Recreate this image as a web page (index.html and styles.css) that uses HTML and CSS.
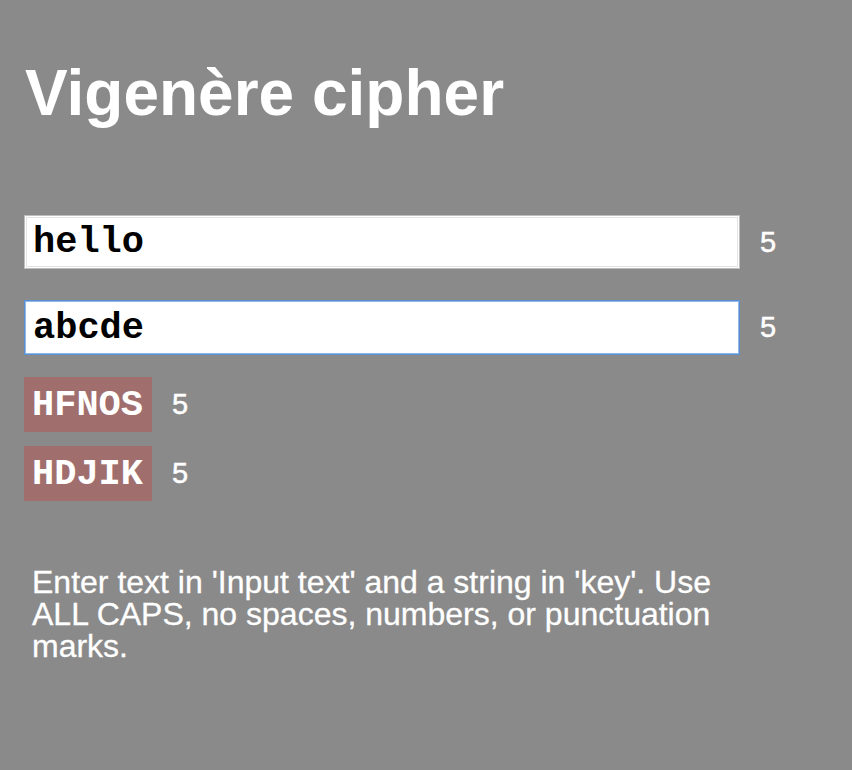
FILE: index.html
```html
<!DOCTYPE html>
<html lang="en">
<head>
<meta charset="utf-8">
<title>Vigenère cipher</title>
<link rel="stylesheet" href="styles.css">
</head>
<body>
<main class="app">
  <h1 class="title">Vigenère cipher</h1>
  <div class="inputs">
    <div class="row">
      <input class="field" type="text" value="hello" aria-label="Input text">
      <span class="count">5</span>
    </div>
    <div class="row">
      <input class="field field--focus" type="text" value="abcde" aria-label="key">
      <span class="count">5</span>
    </div>
  </div>
  <div class="results">
    <div class="row">
      <span class="result">HFNOS</span>
      <span class="count">5</span>
    </div>
    <div class="row">
      <span class="result">HDJIK</span>
      <span class="count">5</span>
    </div>
  </div>
  <p class="help">Enter text in 'Input text' and a string in 'key'. Use ALL CAPS, no spaces, numbers, or punctuation marks.</p>
</main>
</body>
</html>
```

FILE: styles.css
```css
html, body {
  margin: 0;
  padding: 0;
  background: #8a8a8a;
}

body {
  font-family: "Liberation Sans", Arial, Helvetica, sans-serif;
  color: #ffffff;
}

.app {
  width: 716px;
  padding: 61px 24px 0 24px;
}

.title {
  margin: 0;
  padding-left: 1px;
  font-size: 64px;
  line-height: 64px;
  font-weight: 700;
  color: #ffffff;
}

.inputs {
  margin-top: 90px;
  display: flex;
  flex-direction: column;
  gap: 31px;
}

.results {
  margin-top: 22px;
  display: flex;
  flex-direction: column;
  gap: 14px;
}

.row {
  display: flex;
  align-items: center;
  gap: 20px;
}

.field {
  box-sizing: border-box;
  width: 716px;
  height: 54px;
  margin: 0;
  padding: 0 8px;
  border: 1px solid #bdbdbd;
  box-shadow: inset 0 0 0 1px #ffffff, inset 0 0 0 2px #e4e4e4;
  background: #ffffff;
  color: #000000;
  font-family: "Liberation Mono", "Courier New", monospace;
  font-size: 37px;
  font-weight: 700;
  outline: none;
  flex: none;
}

.field--focus {
  height: 55px;
  border: 1px solid #5b8fd4;
  box-shadow: inset 0 0 0 1px #8fb6e6;
}

.result {
  box-sizing: border-box;
  height: 55px;
  padding: 0 9px 0 8px;
  display: flex;
  align-items: center;
  background: #a16e6e;
  color: #ffffff;
  font-family: "Liberation Mono", "Courier New", monospace;
  font-size: 37px;
  font-weight: 700;
}

.count {
  font-size: 29px;
  line-height: 29px;
  color: #ffffff;
  -webkit-text-stroke: 0.5px #ffffff;
}

.help {
  margin: 65px 0 0 0;
  padding: 0 8px;
  font-size: 32px;
  line-height: 32px;
  color: #ffffff;
  -webkit-text-stroke: 0.3px #ffffff;
}
```
